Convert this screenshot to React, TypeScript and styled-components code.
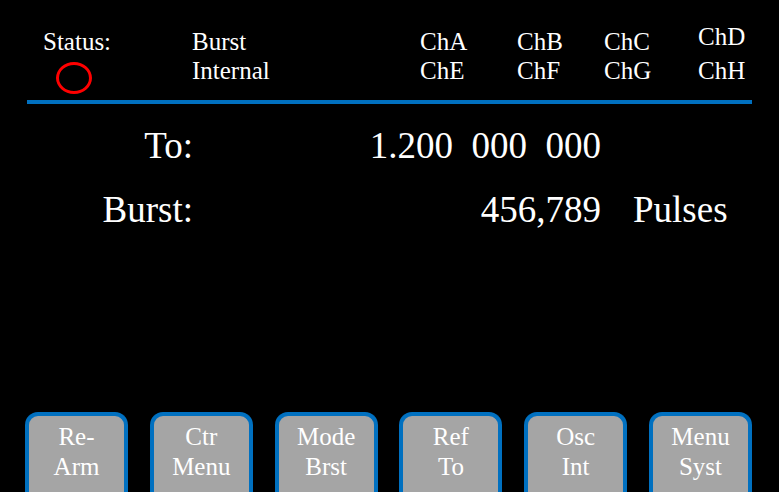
import styled, { createGlobalStyle } from "styled-components";

const GlobalStyle = createGlobalStyle`
  html, body {
    margin: 0;
    padding: 0;
    background: #000;
  }
  body {
    font-family: "Liberation Serif", "Times New Roman", serif;
    color: #fff;
  }
`;

const channels = [
  ["ChA", "ChE"],
  ["ChB", "ChF"],
  ["ChC", "ChG"],
  ["ChD", "ChH"],
];

const softKeys = [
  ["Re-", "Arm"],
  ["Ctr", "Menu"],
  ["Mode", "Brst"],
  ["Ref", "To"],
  ["Osc", "Int"],
  ["Menu", "Syst"],
];

const App = () => {
  return (
    <>
      <GlobalStyle />
      <Screen>
        <Header>
          <StatusCell>
            <span>Status:</span>
            <StatusLamp />
          </StatusCell>
          <Cell>
            <span>Burst</span>
            <span>Internal</span>
          </Cell>
          {channels.map(([top, bottom], i) => (
            <Cell key={top}>
              <ChannelTop $lift={i === 3}>{top}</ChannelTop>
              <span>{bottom}</span>
            </Cell>
          ))}
        </Header>
        <Rule />
        <Readout>
          <Label>To:</Label>
          <Value>{"1.200  000  000"}</Value>
          <Unit />
          <Label>Burst:</Label>
          <Value>456,789</Value>
          <Unit>Pulses</Unit>
        </Readout>
        <KeyBar>
          {softKeys.map(([a, b]) => (
            <SoftKey key={a + b}>
              <span>{a}</span>
              <span>{b}</span>
            </SoftKey>
          ))}
        </KeyBar>
      </Screen>
    </>
  );
};

const Screen = styled.div`
  width: 779px;
  height: 492px;
  background: #000;
  overflow: hidden;
  display: flex;
  flex-direction: column;
`;

const Header = styled.div`
  display: grid;
  grid-template-columns: 149px 228px 97px 87px 94px 1fr;
  padding: 27px 0 0 43px;
  font-size: 25px;
  line-height: 29px;
`;

const Cell = styled.div`
  display: flex;
  flex-direction: column;
  white-space: nowrap;
`;

const StatusCell = styled(Cell)`
  align-items: flex-start;
`;

const ChannelTop = styled.span<{ $lift?: boolean }>`
  margin-top: ${(p) => (p.$lift ? "-5px" : "0")};
  margin-bottom: ${(p) => (p.$lift ? "5px" : "0")};
`;

const StatusLamp = styled.div`
  width: 36px;
  height: 32px;
  box-sizing: border-box;
  border: 3.5px solid #ff0000;
  border-radius: 50%;
  margin: 6px 0 0 13px;
`;

const Rule = styled.div`
  height: 4px;
  background: #0070c0;
  margin: 6px 27px 0 27px;
`;

const Readout = styled.div`
  display: grid;
  grid-template-columns: 193px 408px 1fr;
  margin-top: 10px;
  font-size: 37px;
  line-height: 64px;
`;

const Label = styled.div`
  text-align: right;
`;

const Value = styled.div`
  text-align: right;
  white-space: pre;
`;

const Unit = styled.div`
  padding-left: 32px;
`;

const KeyBar = styled.div`
  margin-top: auto;
  display: flex;
  justify-content: space-between;
  padding: 0 27px 0 25px;
`;

const SoftKey = styled.div`
  width: 103px;
  height: 80px;
  box-sizing: border-box;
  background: #a5a5a5;
  border: 4px solid #0070c0;
  border-bottom: none;
  border-radius: 13px 13px 0 0;
  padding-top: 6px;
  display: flex;
  flex-direction: column;
  align-items: center;
  font-size: 25px;
  line-height: 30px;
  color: #fff;
`;

export default App;
